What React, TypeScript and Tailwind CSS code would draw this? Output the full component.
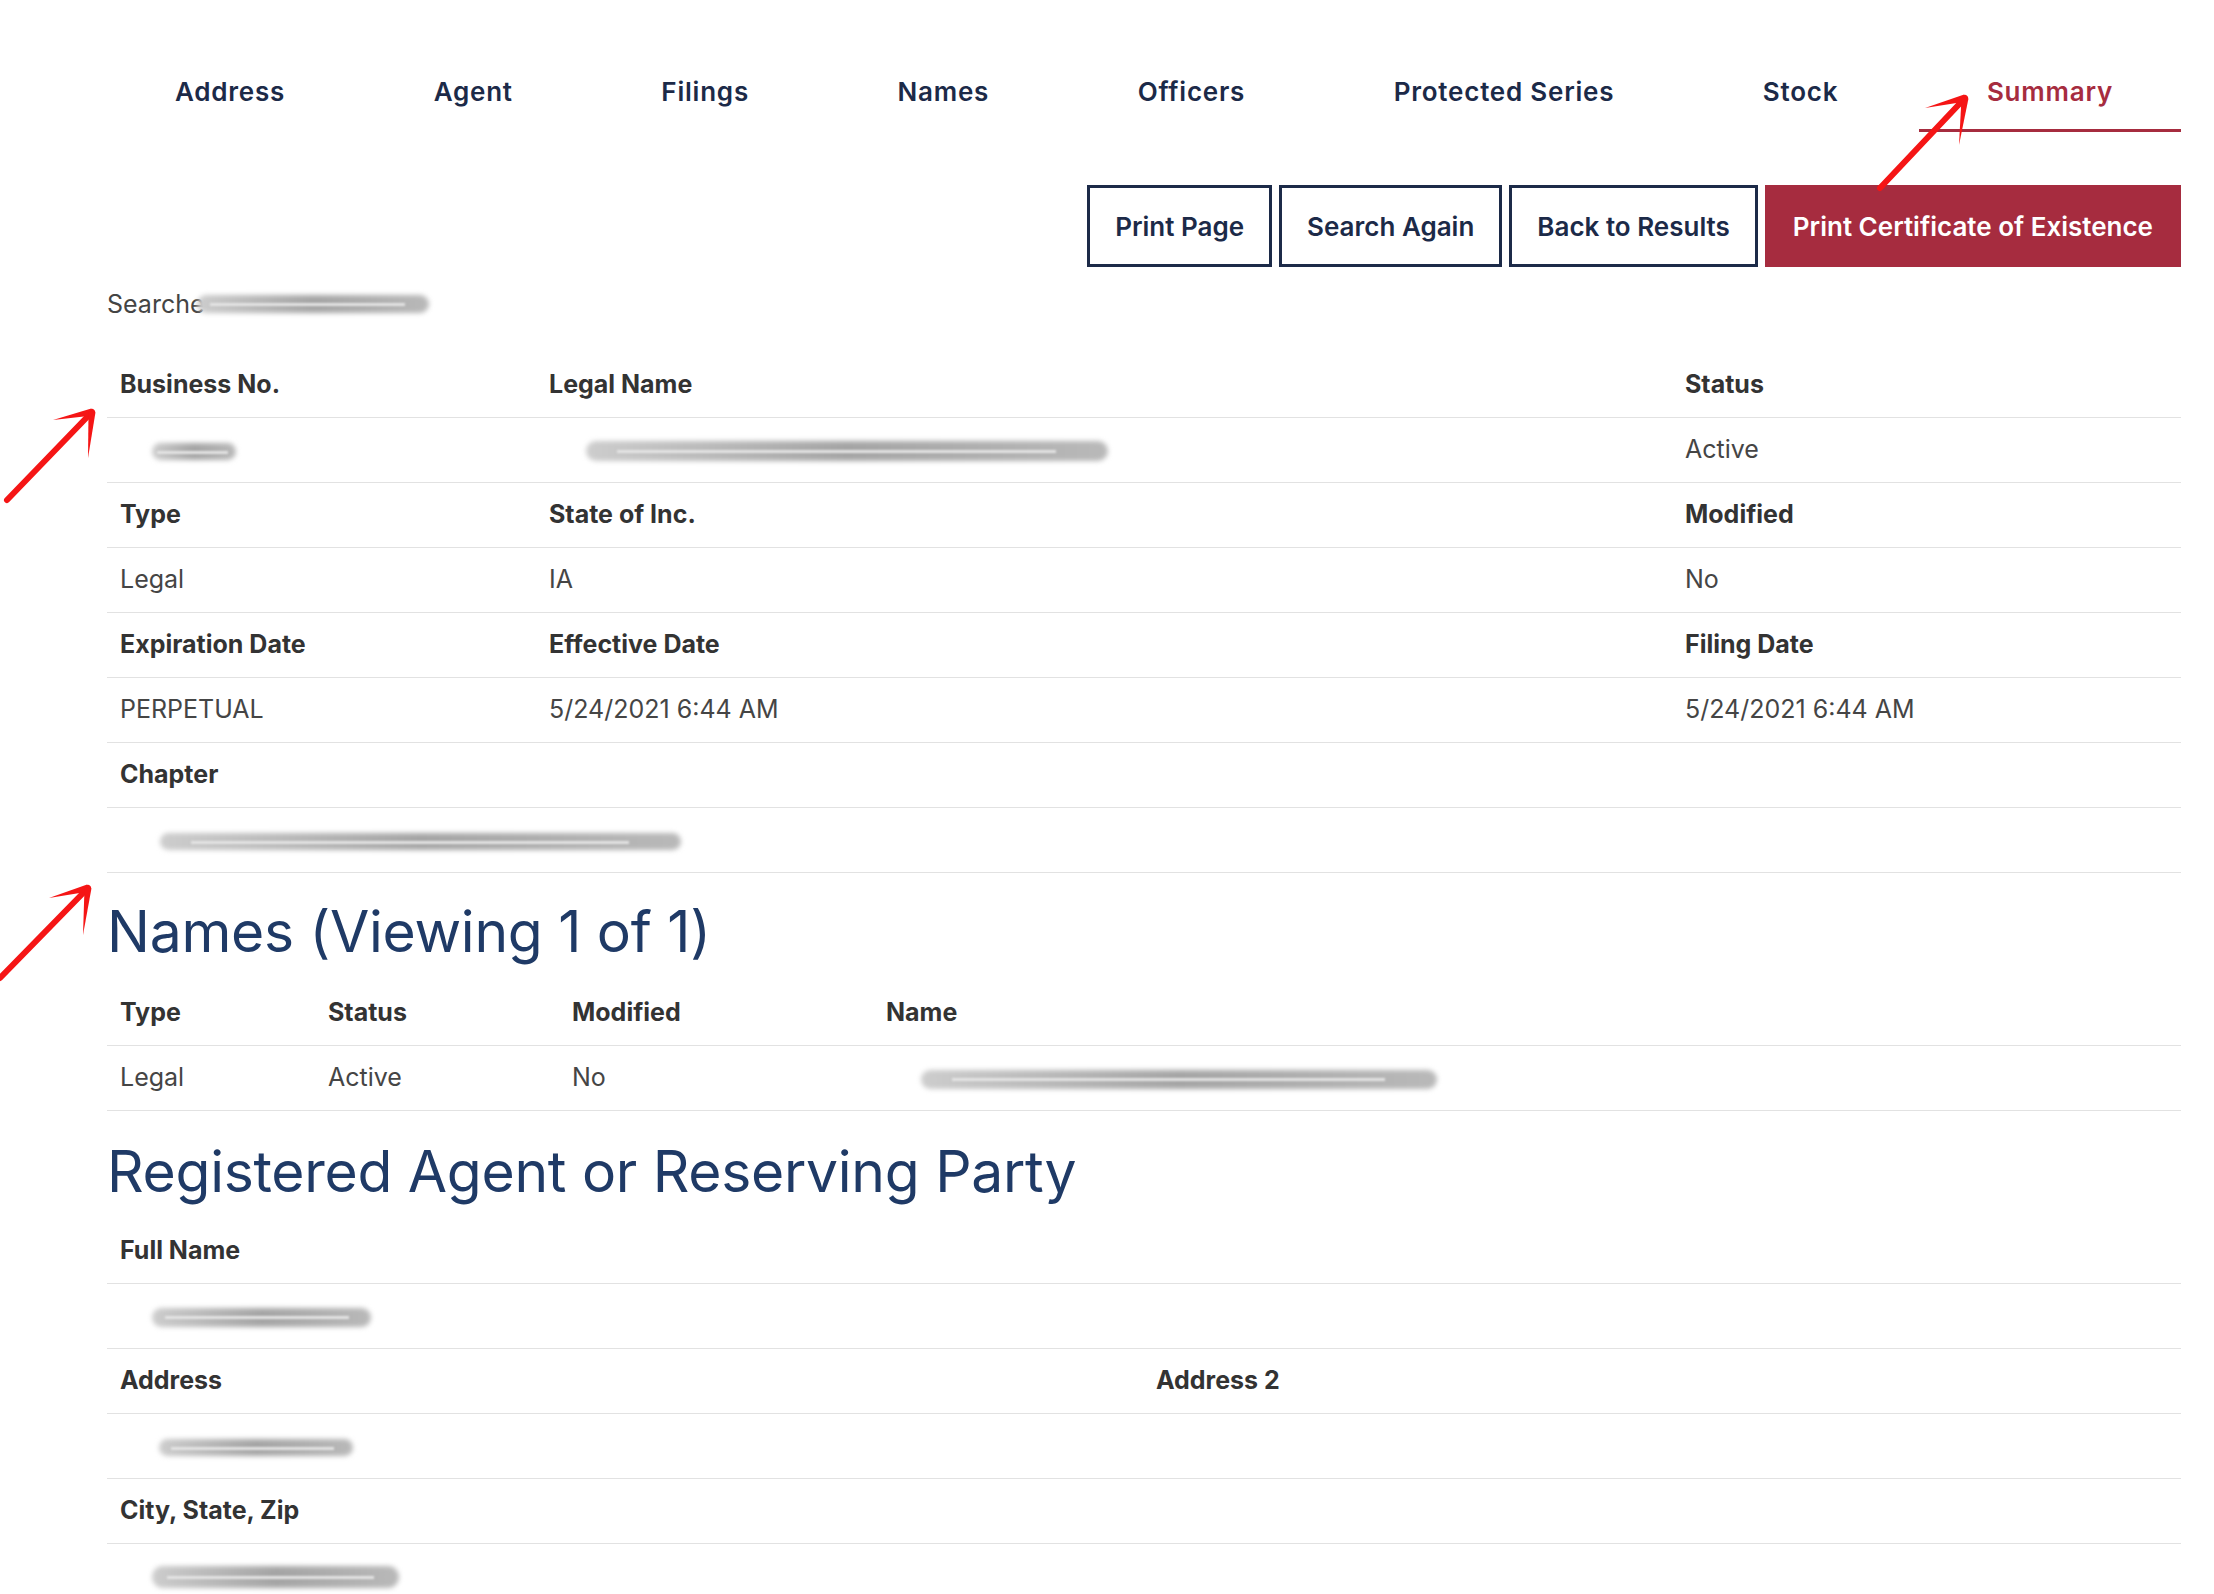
import React from "react";

const tabs = ["Address", "Agent", "Filings", "Names", "Officers", "Protected Series", "Stock", "Summary"];

type Pt = [number, number];

// blurred-out value, stands in for redacted text
function Smudge({ w, ml = 0, h = 17 }: { w: number; ml?: number; h?: number }) {
  return (
    <span className="relative inline-block align-middle" style={{ width: w, height: h, marginLeft: ml }}>
      <span className="absolute inset-0 rounded-full bg-linear-to-r from-[#cdcdcd] via-[#a4a4a4] to-[#b9b9b9] blur-[2.5px]" />
      <span className="absolute left-[6%] right-[10%] top-[45%] h-[3px] bg-[#e4e4e4] blur-[1px]" />
    </span>
  );
}

function InfoRow({ cols, cells, head }: { cols: string; cells: React.ReactNode[]; head?: boolean }) {
  return (
    <div
      className={`grid ${cols} h-[65px] items-center border-b border-[#e2e2e2] ${
        head ? "font-bold text-[#333333]" : "font-normal text-[#454545]"
      }`}
    >
      {cells.map((c, i) => (
        <div key={i} className="pl-[13px] whitespace-nowrap">
          {c}
        </div>
      ))}
    </div>
  );
}

function Arrow({ tail, tip, wings }: { tail: Pt; tip: Pt; wings: Pt[] }) {
  const wing = (e: Pt) => {
    const dx = e[0] - tip[0];
    const dy = e[1] - tip[1];
    const len = Math.hypot(dx, dy);
    const nx = (-dy / len) * 3.5;
    const ny = (dx / len) * 3.5;
    return `${tip[0] + nx},${tip[1] + ny} ${tip[0] - nx},${tip[1] - ny} ${e[0]},${e[1]}`;
  };
  return (
    <g fill="#f51515">
      <line x1={tail[0]} y1={tail[1]} x2={tip[0]} y2={tip[1]} stroke="#f51515" strokeWidth={6} strokeLinecap="round" />
      {wings.map((w, i) => (
        <polygon key={i} points={wing(w)} />
      ))}
    </g>
  );
}

export default function App() {
  const main = "grid-cols-[429px_1136px_1fr]";
  const names = "grid-cols-[208px_244px_314px_1fr]";
  const agent = "grid-cols-[1036px_1fr]";

  return (
    <div className="relative min-h-screen overflow-hidden bg-white" style={{ fontFamily: "Inter, 'Noto Sans', sans-serif" }}>
      <div className="pl-[107px] pr-[33px] text-[25px]">
        {/* Tabs */}
        <nav className="flex justify-between">
          {tabs.map((t) => (
            <div
              key={t}
              className={`px-[68px] pt-[76px] pb-[21px] border-b-[3px] text-[26px] leading-[32px] font-semibold tracking-[0.03em] ${
                t === "Summary" ? "border-[#a62c3f] text-[#a62c3f]" : "border-transparent text-[#1c2a48]"
              }`}
            >
              {t}
            </div>
          ))}
        </nav>

        {/* Actions */}
        <div className="mt-[53px] flex justify-end gap-[7px]">
          {["Print Page", "Search Again", "Back to Results"].map((b) => (
            <button
              key={b}
              className="h-[82px] px-[25px] border-[3px] border-[#1c2a48] bg-white text-[26px] font-semibold text-[#1c2a48]"
            >
              {b}
            </button>
          ))}
          <button className="h-[82px] px-[25px] border-[3px] border-[#a62c3f] bg-[#a62c3f] text-[26px] font-semibold text-white">
            Print Certificate of Existence
          </button>
        </div>

        <div className="mt-[22px] flex items-center leading-[30px] text-[#444444]">
          <span>Searche</span>
          <Smudge w={232} ml={-8} h={18} />
        </div>

        {/* Business summary */}
        <div className="mt-[34px]">
          <InfoRow head cols={main} cells={["Business No.", "Legal Name", "Status"]} />
          <InfoRow cols={main} cells={[<Smudge w={84} ml={32} />, <Smudge w={522} ml={37} h={20} />, "Active"]} />
          <InfoRow head cols={main} cells={["Type", "State of Inc.", "Modified"]} />
          <InfoRow cols={main} cells={["Legal", "IA", "No"]} />
          <InfoRow head cols={main} cells={["Expiration Date", "Effective Date", "Filing Date"]} />
          <InfoRow cols={main} cells={["PERPETUAL", "5/24/2021 6:44 AM", "5/24/2021 6:44 AM"]} />
          <InfoRow head cols="grid-cols-1" cells={["Chapter"]} />
          <InfoRow cols="grid-cols-1" cells={[<Smudge w={521} ml={40} />]} />
        </div>

        <h2 className="pt-[24px] pb-[14px] text-[57px] leading-[70px] tracking-[-0.005em] font-normal text-[#1f3a66]">
          Names (Viewing 1 of 1)
        </h2>
        <InfoRow head cols={names} cells={["Type", "Status", "Modified", "Name"]} />
        <InfoRow cols={names} cells={["Legal", "Active", "No", <Smudge w={516} ml={35} h={19} />]} />

        <h2 className="pt-[26px] pb-[12px] text-[57px] leading-[70px] tracking-[-0.005em] font-normal text-[#1f3a66]">
          Registered Agent or Reserving Party
        </h2>
        <InfoRow head cols="grid-cols-1" cells={["Full Name"]} />
        <InfoRow cols="grid-cols-1" cells={[<Smudge w={219} ml={32} h={19} />]} />
        <InfoRow head cols={agent} cells={["Address", "Address 2"]} />
        <InfoRow cols={agent} cells={[<Smudge w={194} ml={39} />, ""]} />
        <InfoRow head cols="grid-cols-1" cells={["City, State, Zip"]} />
        <InfoRow cols="grid-cols-1" cells={[<Smudge w={247} ml={32} h={22} />]} />
      </div>

      {/* hand-drawn pointers */}
      <svg className="pointer-events-none absolute left-0 top-0" width={2214} height={1594}>
        <Arrow tail={[1880, 188]} tip={[1965, 98]} wings={[[1925, 108], [1959, 145]]} />
        <Arrow tail={[7, 500]} tip={[92, 412]} wings={[[53, 420], [88, 458]]} />
        <Arrow tail={[0, 978]} tip={[88, 888]} wings={[[49, 898], [83, 935]]} />
      </svg>
    </div>
  );
}
